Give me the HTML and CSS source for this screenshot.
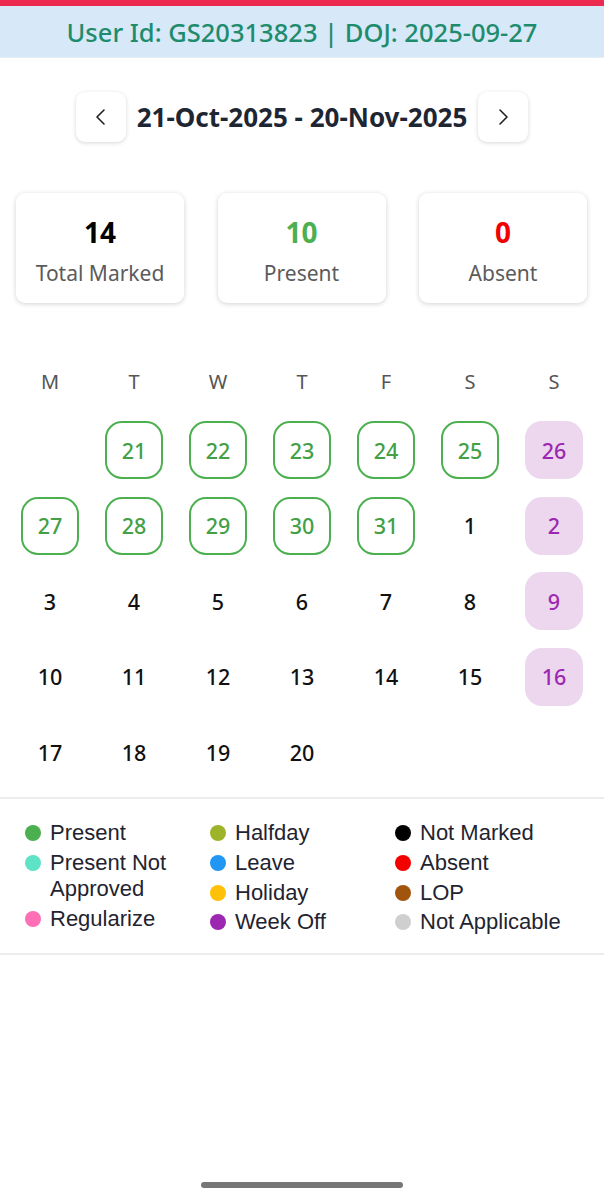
FILE: index.html
```html
<!DOCTYPE html>
<html>
<head>
<meta charset="utf-8">
<link rel="stylesheet" href="styles.css">
</head>
<body>
<div class="topbar"></div>
<div class="userbar">User Id: GS20313823 | DOJ: 2025-09-27</div>

<div class="nav">
  <button class="navbtn" aria-label="Previous">
    <svg width="14" height="18" viewBox="0 0 14 18"><path d="M10 2 L3 9 L10 16" fill="none" stroke="#222" stroke-width="1.6" stroke-linecap="round" stroke-linejoin="round"/></svg>
  </button>
  <div class="range">21-Oct-2025 - 20-Nov-2025</div>
  <button class="navbtn" aria-label="Next">
    <svg width="14" height="18" viewBox="0 0 14 18"><path d="M4 2 L11 9 L4 16" fill="none" stroke="#222" stroke-width="1.6" stroke-linecap="round" stroke-linejoin="round"/></svg>
  </button>
</div>

<div class="stats">
  <div class="card"><div class="num">14</div><div class="lbl">Total Marked</div></div>
  <div class="card"><div class="num green">10</div><div class="lbl">Present</div></div>
  <div class="card"><div class="num red">0</div><div class="lbl">Absent</div></div>
</div>

<div class="calendar">
  <div class="weekdays">
    <span>M</span><span>T</span><span>W</span><span>T</span><span>F</span><span>S</span><span>S</span>
  </div>
  <div class="days">
    <span class="day"></span>
    <span class="day present">21</span>
    <span class="day present">22</span>
    <span class="day present">23</span>
    <span class="day present">24</span>
    <span class="day present">25</span>
    <span class="day off">26</span>

    <span class="day present">27</span>
    <span class="day present">28</span>
    <span class="day present">29</span>
    <span class="day present">30</span>
    <span class="day present">31</span>
    <span class="day">1</span>
    <span class="day off">2</span>

    <span class="day">3</span>
    <span class="day">4</span>
    <span class="day">5</span>
    <span class="day">6</span>
    <span class="day">7</span>
    <span class="day">8</span>
    <span class="day off">9</span>

    <span class="day">10</span>
    <span class="day">11</span>
    <span class="day">12</span>
    <span class="day">13</span>
    <span class="day">14</span>
    <span class="day">15</span>
    <span class="day off">16</span>

    <span class="day">17</span>
    <span class="day">18</span>
    <span class="day">19</span>
    <span class="day">20</span>
  </div>
</div>

<div class="legend">
  <div class="lcol">
    <div class="litem"><i class="dot c-present"></i><span>Present</span></div>
    <div class="litem"><i class="dot c-pna"></i><span>Present Not Approved</span></div>
    <div class="litem"><i class="dot c-reg"></i><span>Regularize</span></div>
  </div>
  <div class="lcol">
    <div class="litem"><i class="dot c-half"></i><span>Halfday</span></div>
    <div class="litem"><i class="dot c-leave"></i><span>Leave</span></div>
    <div class="litem"><i class="dot c-hol"></i><span>Holiday</span></div>
    <div class="litem"><i class="dot c-off"></i><span>Week Off</span></div>
  </div>
  <div class="lcol">
    <div class="litem"><i class="dot c-nm"></i><span>Not Marked</span></div>
    <div class="litem"><i class="dot c-abs"></i><span>Absent</span></div>
    <div class="litem"><i class="dot c-lop"></i><span>LOP</span></div>
    <div class="litem"><i class="dot c-na"></i><span>Not Applicable</span></div>
  </div>
</div>

<div class="homebar"></div>
</body>
</html>
```

FILE: styles.css
```css
* { box-sizing: border-box; }
html, body {
  margin: 0;
  padding: 0;
  background: #fff;
  font-family: "Noto Sans", "Open Sans", sans-serif;
}
body {
  width: 604px;
  height: 1200px;
  position: relative;
  overflow: hidden;
}
.topbar {
  height: 6px;
  background: #ec2a4f;
}
.userbar {
  height: 52px;
  background: #d7e8f8;
  color: #1e8c6c;
  font-size: 25.5px;
  font-weight: 500;
  display: flex;
  align-items: center;
  justify-content: center;
  border-bottom: 1px solid #e6eef5;
  padding-top: 1px;
}
.nav {
  margin-top: 34px;
  display: flex;
  justify-content: center;
  align-items: center;
  gap: 11px;
}
.navbtn {
  width: 50px;
  height: 50px;
  border: none;
  background: #fff;
  border-radius: 9px;
  box-shadow: 0 1px 4px rgba(0,0,0,0.16);
  display: flex;
  align-items: center;
  justify-content: center;
  padding: 0;
}
.range {
  font-size: 26px;
  font-weight: 700;
  color: #1e2634;
  line-height: 34px;
}
.stats {
  margin-top: 51px;
  padding: 0 17px 0 16px;
  display: flex;
  justify-content: space-between;
}
.card {
  width: 168px;
  height: 110px;
  border-radius: 9px;
  background: #fff;
  box-shadow: 0 1px 5px rgba(0,0,0,0.18);
  display: flex;
  flex-direction: column;
  align-items: center;
  padding-top: 22px;
}
.num {
  font-size: 28px;
  font-weight: 700;
  color: #000;
  line-height: 34px;
}
.num.green { color: #4caf50; }
.num.red { color: #f20000; }
.lbl {
  margin-top: 10px;
  font-size: 21px;
  color: #5b5b5b;
  line-height: 28px;
}
.calendar {
  margin-top: 58px;
  padding: 0 8px;
}
.weekdays {
  display: grid;
  grid-template-columns: repeat(7, 1fr);
  height: 40px;
  align-items: center;
  text-align: center;
  font-size: 20px;
  color: #555;
}
.days {
  margin-top: 20px;
  display: grid;
  grid-template-columns: repeat(7, 1fr);
  grid-auto-rows: 58px;
  row-gap: 17.6px;
  justify-items: center;
}
.day {
  width: 58px;
  height: 58px;
  display: flex;
  align-items: center;
  justify-content: center;
  font-size: 21.5px;
  font-weight: 500;
  color: #111;
  border-radius: 17px;
}
.day.present {
  border: 2px solid #4caf50;
  color: #43a047;
}
.day.off {
  background: #ecd7ef;
  color: #9c27b0;
}
.legend {
  margin-top: 16px;
  border-top: 2px solid #ececec;
  border-bottom: 2px solid #ececec;
  padding: 19px 0 16px 25px;
  display: grid;
  grid-template-columns: 185px 185px 185px;
  font-family: "Liberation Sans", Arial, sans-serif;
  font-size: 22px;
  color: #1f2430;
}
.lcol {
  display: flex;
  flex-direction: column;
}
.litem {
  display: flex;
  align-items: flex-start;
  padding-right: 14px;
}
.litem span { line-height: 26px; padding: 2px 0 1.7px; }
.dot {
  flex: none;
  width: 16px;
  height: 16px;
  border-radius: 50%;
  margin-top: 7px;
  margin-right: 9px;
}
.c-present { background: #4caf50; }
.c-pna { background: #5ee3c6; }
.c-reg { background: #ff6fb5; }
.c-half { background: #9db42a; }
.c-leave { background: #2196f3; }
.c-hol { background: #ffc107; }
.c-off { background: #9c27b0; }
.c-nm { background: #000; }
.c-abs { background: #f40000; }
.c-lop { background: #a1550c; }
.c-na { background: #cfcfcf; }
.homebar {
  position: absolute;
  left: 201px;
  bottom: 12px;
  width: 202px;
  height: 6px;
  border-radius: 3px;
  background: #767676;
}
```
